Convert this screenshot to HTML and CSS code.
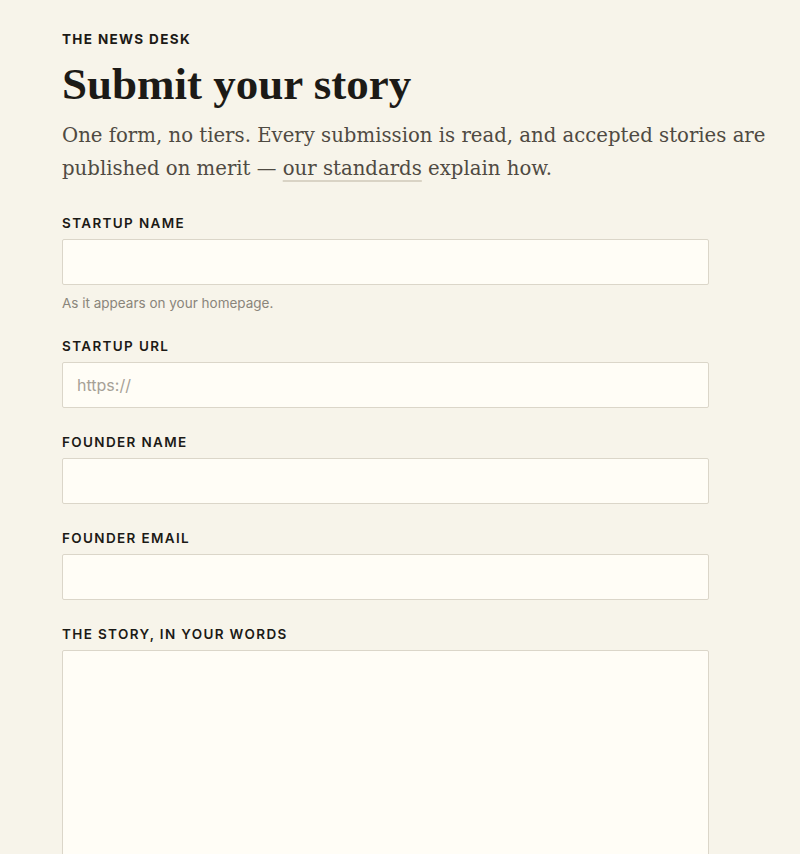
FILE: index.html
```html
<!DOCTYPE html>
<html lang="en">
<head>
<meta charset="utf-8">
<title>Submit your story</title>
<link rel="stylesheet" href="styles.css">
</head>
<body>
<main class="page">
  <p class="eyebrow">The News Desk</p>
  <h1 class="title">Submit your story</h1>
  <p class="lede">One form, no tiers. Every submission is read, and accepted stories are published on merit — <a class="lede-link" href="#">our standards</a> explain how.</p>
  <form class="form">
    <div class="field">
      <label class="label" for="sname">Startup name</label>
      <input class="input" id="sname" type="text">
      <p class="hint">As it appears on your homepage.</p>
    </div>
    <div class="field">
      <label class="label" for="surl">Startup URL</label>
      <input class="input" id="surl" type="url" placeholder="https://">
    </div>
    <div class="field">
      <label class="label" for="fname">Founder name</label>
      <input class="input" id="fname" type="text">
    </div>
    <div class="field">
      <label class="label" for="femail">Founder email</label>
      <input class="input" id="femail" type="email">
    </div>
    <div class="field">
      <label class="label" for="story">The story, in your words</label>
      <textarea class="input textarea" id="story"></textarea>
    </div>
  </form>
</main>
</body>
</html>
```
FILE: styles.css
```css
html, body {
  margin: 0;
  padding: 0;
  background: #f7f4ea;
}
.page {
  padding: 30px 0 40px 62px;
  max-width: 716px;
}
.eyebrow {
  margin: 0;
  font-family: "Inter", "Liberation Sans", sans-serif;
  font-size: 13.5px;
  line-height: 18px;
  font-weight: 700;
  letter-spacing: 0.1em;
  text-transform: uppercase;
  color: #1c1a16;
}
.title {
  margin: 11px 0 0;
  font-family: "Liberation Serif", serif;
  font-size: 45px;
  line-height: 50px;
  font-weight: 700;
  color: #1c1a16;
}
.lede {
  margin: 10px 0 0;
  font-family: "DejaVu Serif", serif;
  font-size: 19.7px;
  line-height: 33px;
  color: #4f4a42;
}
.lede-link {
  color: inherit;
  text-decoration: underline;
  text-decoration-color: #d9d3c5;
  text-decoration-thickness: 2px;
  text-underline-offset: 5px;
}
.form {
  margin-top: 29px;
  max-width: 647px;
  display: flex;
  flex-direction: column;
  gap: 25px;
}
.field {
  display: flex;
  flex-direction: column;
}
.label {
  font-family: "Inter", "Liberation Sans", sans-serif;
  font-size: 13.5px;
  line-height: 18px;
  font-weight: 600;
  letter-spacing: 0.1em;
  text-transform: uppercase;
  color: #1c1a16;
  margin-bottom: 7px;
}
.input {
  box-sizing: border-box;
  width: 100%;
  height: 46px;
  margin: 0;
  padding: 0 14px;
  border: 1px solid #dbd6c9;
  border-radius: 2px;
  background: #fffdf6;
  font-family: "Inter", "Liberation Sans", sans-serif;
  font-size: 16px;
  color: #1c1a16;
}
.input::placeholder {
  color: #a6a196;
}
.textarea {
  height: 260px;
  resize: none;
  padding: 12px 14px;
}
.hint {
  margin: 9px 0 0;
  font-family: "Inter", "Liberation Sans", sans-serif;
  font-size: 13.5px;
  line-height: 18px;
  color: #8a857b;
}
```
